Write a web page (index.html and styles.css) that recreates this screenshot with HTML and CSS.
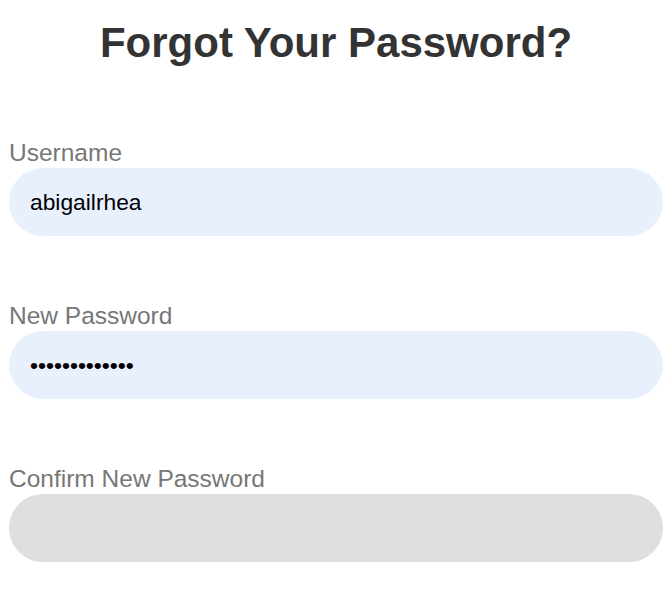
FILE: index.html
```html
<!DOCTYPE html>
<html>
<head>
<meta charset="utf-8">
<link rel="stylesheet" href="styles.css">
</head>
<body>
<main class="page">
  <h1 class="title">Forgot Your Password?</h1>
  <form class="form">
    <div class="field">
      <label class="label" for="u">Username</label>
      <input class="input input-filled" id="u" type="text" value="abigailrhea">
    </div>
    <div class="field">
      <label class="label" for="p">New Password</label>
      <input class="input input-filled" id="p" type="password" value="abigailrhea12">
    </div>
    <div class="field">
      <label class="label" for="c">Confirm New Password</label>
      <input class="input input-empty" id="c" type="password">
    </div>
  </form>
</main>
</body>
</html>
```
FILE: styles.css
```css
html, body {
  margin: 0;
  padding: 0;
  background: #ffffff;
}
body {
  padding: 0 7px 0 9px;
  font-family: "Liberation Sans", Arial, sans-serif;
}
.page {
  display: flex;
  flex-direction: column;
}
.title {
  margin: 19px 0 0 0;
  font-size: 42px;
  line-height: 48px;
  font-weight: bold;
  color: #333333;
  text-align: center;
}
.form {
  display: flex;
  flex-direction: column;
  gap: 65px;
  margin-top: 71px;
}
.field {
  display: flex;
  flex-direction: column;
}
.label {
  font-size: 24.5px;
  line-height: 30px;
  color: #777777;
}
.input {
  box-sizing: border-box;
  width: 100%;
  height: 68px;
  border: none;
  outline: none;
  border-radius: 34px;
  padding: 0 21px;
  font-family: "Liberation Sans", Arial, sans-serif;
  font-size: 22.8px;
  color: #000000;
}
.input-filled {
  background: #e8f0fe;
}
.input-empty {
  background: #dfdfdf;
}
```
